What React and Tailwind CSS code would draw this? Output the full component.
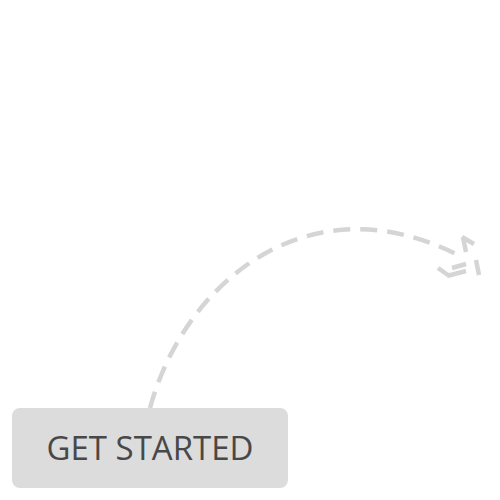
export default function App() {
  return (
    <div className="relative w-[500px] h-[500px] bg-white overflow-hidden flex flex-col justify-end pl-[12px] pb-[12px]">
      <svg className="absolute inset-0" width="500" height="500" viewBox="0 0 500 500" fill="none">
        <path
          d="M150 408 C185 280 310 180 458 255"
          stroke="#d5d5d5"
          strokeWidth="4.5"
          strokeDasharray="17 10"
          fill="none"
        />
        <g stroke="#d5d5d5" strokeWidth="4.5" strokeLinecap="butt">
          <line x1="463" y1="237" x2="466" y2="252" />
          <line x1="462" y1="237" x2="474" y2="244" />
          <line x1="476" y1="260" x2="479" y2="275" />
          <line x1="438" y1="268" x2="448" y2="275" />
          <line x1="447" y1="276" x2="466" y2="271" />
          <line x1="452" y1="268" x2="466" y2="264" />
        </g>
      </svg>
      <div className="relative w-[276px] h-[80px] rounded-[8px] bg-[#dcdcdc] flex items-center justify-center">
        <span className="text-[33px] text-[#484848] tracking-[0px]" style={{ fontFamily: '"Open Sans", sans-serif' }}>
          GET STARTED
        </span>
      </div>
    </div>
  );
}
